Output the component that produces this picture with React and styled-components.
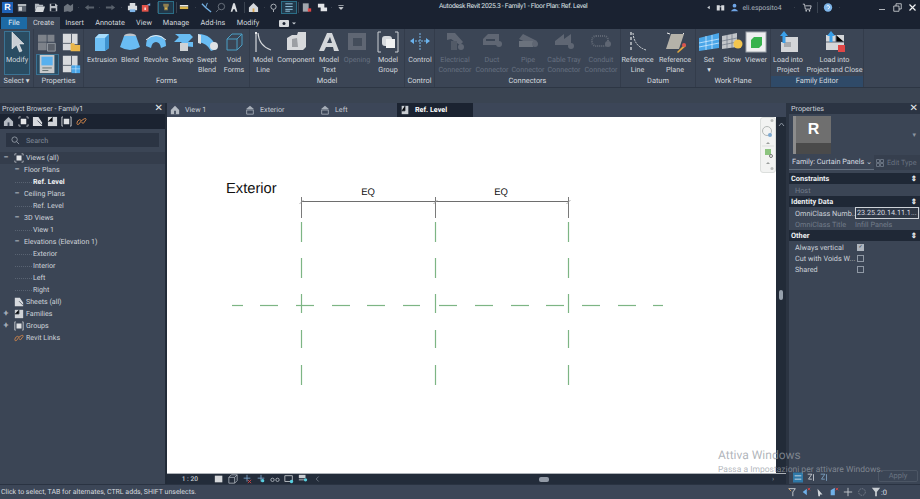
import React from "react";
import styled, { createGlobalStyle } from "styled-components";

const GlobalStyle = createGlobalStyle`
  html, body { margin: 0; padding: 0; background: #3a4452; }
  body {
    width: 920px;
    height: 499px;
    overflow: hidden;
    font-family: Roboto, "Liberation Sans", sans-serif;
    text-rendering: geometricPrecision;
  }
`;

const Shell = styled.div`
  position: relative;
  width: 920px;
  height: 499px;
  display: flex;
  flex-direction: column;
  background: #3a4452;
  color: #d8dde4;
  overflow: hidden;
`;

// title bar
const TitleBar = styled.div`
  height: 15px;
  flex: none;
  display: flex;
  align-items: center;
  background: #1a2231;
  position: relative;
`;
const Logo = styled.div`
  width: 11px;
  height: 11px;
  margin-left: 2px;
  background: #1f62b8;
  color: #fff;
  font: 700 9px/11px "Liberation Sans", sans-serif;
  text-align: center;
  flex: none;
`;
const Slot = styled.span`
  width: ${(p) => p.$w}px;
  height: 11px;
  flex: none;
  margin-left: ${(p) => p.$ml}px;
  display: flex;
  align-items: center;
  justify-content: center;
  white-space: nowrap;
  font-size: 6.9px;
  color: #aab2bd;
  ${(p) => p.$on && "outline: 1px solid #2b6d86; background: #21384a;"}
  ${(p) => p.$sep && "background: #3a4350;"}
  svg { width: ${(p) => p.$w}px; height: 11px; display: block; }
`;
const Title = styled.div`
  position: absolute;
  left: 439px;
  top: 0;
  font-size: 6.8px;
  letter-spacing: -0.3px;
  line-height: 12px;
  color: #dfe3e8;
  white-space: nowrap;
`;

// tabs
const TabRow = styled.div`
  height: 14px;
  flex: none;
  display: flex;
  background: #1a2231;
  padding-left: 1px;
  font-size: 7.3px;
`;
const RibbonTab = styled.div`
  width: ${(p) => p.$w}px;
  text-align: center;
  color: ${(p) => (p.$file ? "#e8f1f8" : "#d3d8de")};
  background: ${(p) => (p.$file ? "#1d6aa5" : p.$active ? "#3b4555" : "transparent")};
  margin-top: 2px;
  height: 12px;
  line-height: 12px;
`;
const TabExtra = styled.div`
  margin: 4px 0 0 14px;
  display: flex;
  gap: 3px;
  svg { width: 10px; height: 8px; display: block; }
`;

// ribbon
const Ribbon = styled.div`
  height: 58px;
  flex: none;
  display: flex;
  background: #3b4555;
  border-bottom: 1px solid #2d3644;
`;
const Panel = styled.div`
  width: ${(p) => p.$w}px;
  flex: none;
  display: flex;
  flex-direction: column;
  box-sizing: border-box;
  border-right: 1px solid #333c4b;
`;
const PanelBody = styled.div`
  height: 47px;
  display: flex;
  padding-top: 2px;
  padding-left: ${(p) => p.$pl || 0}px;
  box-sizing: border-box;
`;
const PanelLabel = styled.div`
  height: 11px;
  font-size: 7.4px;
  line-height: 10px;
  text-align: center;
  color: #d3d8de;
  background: ${(p) => (p.$accent ? "#2f4a68" : "transparent")};
`;
const Tool = styled.div`
  width: ${(p) => p.$w}px;
  flex: none;
  display: flex;
  flex-direction: column;
  align-items: center;
  font-size: 7.2px;
  line-height: 9.5px;
  text-align: center;
  white-space: nowrap;
  color: ${(p) => (p.$off ? "#667080" : "#d3d8de")};
  ${(p) =>
    p.$on &&
    "background: #2a4c62; outline: 1px solid #3a7394; outline-offset: -1px; height: 44px;"}
  svg { height: 22px; width: 24px; margin-bottom: 2px; flex: none; ${(p) => p.$off && "opacity: .45;"} }
`;
const PropGrid = styled.div`
  width: 50px;
  display: grid;
  grid-template-columns: 23px 23px;
  grid-auto-rows: 21px;
  gap: 1px;
  padding: 1px 2px;
  svg { width: 21px; height: 19px; }
`;
const PropCell = styled.div`
  display: flex;
  align-items: center;
  justify-content: center;
  ${(p) => p.$on && "background: #2a4c62; outline: 1px solid #3a7394; outline-offset: -1px;"}
`;
const Gap = styled.div`
  height: 15px;
  flex: none;
  background: #3a4452;
`;

// main area
const Main = styled.div`
  flex: 1;
  min-height: 0;
  display: flex;
`;
const Browser = styled.aside`
  width: 165px;
  flex: none;
  background: #3b4555;
  display: flex;
  flex-direction: column;
  border-right: 2px solid #222b38;
`;
const DockTitle = styled.div`
  height: 11px;
  flex: none;
  display: flex;
  justify-content: space-between;
  align-items: center;
  background: #2b3443;
  padding: 0 2px;
  font-size: 7.2px;
  color: #ccd2d9;
`;
const Close = styled.span`
  font-size: 10px;
  color: #e4e7ea;
  line-height: 10px;
`;
const BrowserTools = styled.div`
  height: 15px;
  flex: none;
  display: flex;
  align-items: center;
  gap: 3.5px;
  padding-left: 3px;
  background: #1b2331;
  svg { width: 11px; height: 11px; }
`;
const SearchBox = styled.div`
  height: 14px;
  margin: 4px 6px 5px 6px;
  display: flex;
  align-items: center;
  gap: 6px;
  padding-left: 5px;
  background: #2b3443;
  color: #737d8b;
  font-size: 7.2px;
  font-weight: 500;
`;
const Tree = styled.div`
  display: flex;
  flex-direction: column;
`;
const TreeRow = styled.div`
  height: 12px;
  display: flex;
  align-items: center;
  padding-left: ${(p) => p.$indent}px;
  font-size: 7.1px;
  line-height: 12px;
  white-space: nowrap;
  color: #cfd4db;
  font-weight: ${(p) => (p.$bold ? 700 : 400)};
  ${(p) => p.$bold && "color: #f1f3f5;"}
  ${(p) => p.$shade && "background: #343d4c;"}
  svg { width: 10px; height: 10px; margin-right: 2px; flex: none; }
`;
const Lead = styled.span`
  width: ${(p) => p.$w}px;
  flex: none;
  border-top: 1px dotted #596372;
  margin-right: 1px;
`;
const Toggle = styled.span`
  width: 6px;
  flex: none;
  margin-right: ${(p) => p.$gap}px;
  text-align: center;
  color: #aeb6c0;
  font-size: 9px;
  font-weight: 700;
`;

const Center = styled.section`
  width: 619px;
  flex: none;
  display: flex;
  flex-direction: column;
  min-width: 0;
`;
const ViewTabs = styled.div`
  height: 14px;
  flex: none;
  display: flex;
  background: #3c4658;
  font-size: 7.2px;
  line-height: 14px;
`;
const ViewTab = styled.div`
  width: ${(p) => p.$w}px;
  flex: none;
  display: flex;
  align-items: center;
  padding-left: ${(p) => p.$pad}px;
  gap: 5px;
  box-sizing: border-box;
  color: ${(p) => (p.$active ? "#fff" : "#c7ccd4")};
  font-weight: ${(p) => (p.$active ? 700 : 400)};
  background: ${(p) => (p.$active ? "#1b2331" : "transparent")};
  svg { width: 10px; height: 10px; flex: none; }
`;
const CanvasRow = styled.div`
  height: 356px;
  flex: none;
  display: flex;
`;
const CanvasWrap = styled.div`
  position: relative;
  width: 609px;
  flex: none;
  background: #fff;
`;
const Drawing = styled.svg`
  width: 609px;
  height: 356px;
  display: block;
`;
const NavBar = styled.div`
  position: absolute;
  right: 0;
  top: 0;
  width: 16px;
  height: 56px;
  background: #f2f3f2;
  border: 1px solid #dcdfdd;
  border-radius: 3px;
  box-sizing: border-box;
  svg { display: block; width: 14px; height: 54px; }
`;
const ViewBar = styled.div`
  height: 11px;
  flex: none;
  display: flex;
  align-items: center;
  background: #232c3a;
  border-top: 1px solid #aeb2b8;
  box-sizing: border-box;
  font-size: 6.6px;
  color: #c7ccd4;
`;
const Scale = styled.span`
  width: 34px;
  flex: none;
  text-align: right;
  padding-right: 3px;
  box-sizing: border-box;
  font-weight: 500;
`;
const BarIcons = styled.div`
  display: flex;
  align-items: center;
  gap: 4px;
  margin-left: 13px;
  svg { width: 10px; height: 10px; display: block; }
`;
const HThumb = styled.span`
  width: 10px;
  height: 5px;
  border-radius: 2px;
  background: #929aa6;
  margin-left: 217px;
`;
const BarEnd = styled.span`
  margin-left: auto;
  padding-right: 12px;
  color: #8b94a0;
  font-size: 7px;
`;
const VScroll = styled.div`
  width: 10px;
  flex: none;
  display: flex;
  flex-direction: column;
  align-items: center;
  background: #222b38;
`;
const VArrow = styled.span`
  height: 8px;
  margin-top: 4px;
  svg { width: 7px; height: 6px; display: block; }
`;
const VThumb = styled.span`
  width: 4px;
  height: 10px;
  margin-top: 161px;
  background: #96a0ac;
  border-radius: 2px;
`;
const Divider = styled.div`
  width: 3px;
  flex: none;
  background: #2b3442;
`;

const Props = styled.aside`
  flex: 1;
  min-width: 0;
  display: flex;
  flex-direction: column;
  background: #3b4555;
  font-size: 7.3px;
`;
const TypeBox = styled.div`
  height: 41px;
  flex: none;
  display: flex;
  justify-content: space-between;
  align-items: center;
  padding: 1px 4px 0 4px;
  box-sizing: border-box;
`;
const RTile = styled.div`
  width: 38px;
  height: 38px;
  background: linear-gradient(180deg, #6f6f6f 0 72%, #4a4a4a 72%);
  color: #fff;
  font: 700 16px/27px "Liberation Sans", sans-serif;
  text-align: center;
  border-left: 3px solid #8c8c8c;
  box-sizing: border-box;
`;
const FamilyRow = styled.div`
  height: 15px;
  flex: none;
  display: flex;
  align-items: center;
  justify-content: space-between;
  margin-bottom: 3px;
  color: #d7dbe1;
  white-space: nowrap;
`;
const FamilySelect = styled.span`
  width: 85px;
  height: 15px;
  flex: none;
  box-sizing: border-box;
  padding-left: 3px;
  line-height: 14px;
  border-bottom: 1px solid #65707f;
`;
const EditType = styled.span`
  flex: 1;
  height: 15px;
  display: flex;
  align-items: center;
  gap: 3px;
  padding-left: 2px;
  color: #687281;
  background: #363f4e;
  svg { width: 8px; height: 8px; }
`;
const GroupHead = styled.div`
  height: 11.4px;
  display: flex;
  justify-content: space-between;
  align-items: center;
  padding: 0 3px 0 2px;
  background: #1f2836;
  color: #eceef1;
  font-weight: 700;
  font-size: 7.4px;
  line-height: 11px;
`;
const PropRow = styled.div`
  height: 11.4px;
  display: grid;
  grid-template-columns: 60px 1fr;
  align-items: center;
  padding-left: 6px;
  color: ${(p) => (p.$off ? "#727c8a" : "#ccd2d9")};
  white-space: nowrap;
  line-height: 11px;
`;
const ValueBox = styled.span`
  border: 1px solid #cdd2d8;
  background: #2f3846;
  color: #d9dde2;
  height: 10px;
  line-height: 9px;
  margin-right: 1px;
  padding-left: 1px;
  overflow: hidden;
  font-size: 7.2px;
`;
const Check = styled.span`
  width: 5px;
  height: 5px;
  margin-left: 2px;
  border: 1px solid #8f98a4;
  display: block;
  ${(p) => p.$on && "background: #aeb5be; border-color: #aeb5be; color: #2c3543; font: 700 5px/5px 'DejaVu Sans', sans-serif; text-align: center;"}
`;
const Spacer = styled.div`
  flex: 1;
`;
const ApplyRow = styled.div`
  height: 13px;
  flex: none;
  display: flex;
  align-items: center;
  justify-content: flex-end;
  padding: 0 2px 2px 0;
`;
const SortIcons = styled.div`
  position: absolute;
  left: 793px;
  top: 472px;
  display: flex;
  gap: 3px;
  svg { width: 10px; height: 11px; display: block; }
`;
const ApplyBtn = styled.span`
  width: 38px;
  height: 10px;
  border: 1px solid #4c5665;
  border-radius: 2px;
  color: #697381;
  font-size: 7.5px;
  line-height: 10px;
  text-align: center;
`;

const StatusBar = styled.footer`
  height: 15px;
  flex: none;
  display: flex;
  align-items: center;
  justify-content: space-between;
  background: #3c4657;
  border-top: 1px solid #2a3342;
  box-sizing: border-box;
  padding: 0 33px 0 1px;
  font-size: 7px;
  color: #d4d9df;
`;
const StatusIcons = styled.div`
  display: flex;
  align-items: center;
  gap: 4px;
  color: #d8dce1;
  svg { width: 10px; height: 10px; display: block; }
`;
const FilterCount = styled.span`
  display: flex;
  align-items: center;
  font-size: 7.5px;
`;
const Watermark = styled.div`
  position: absolute;
  left: 718px;
  top: 447px;
  color: rgba(150, 156, 164, 0.75);
  white-space: nowrap;
  pointer-events: none;
`;
const WatermarkBig = styled.div`
  font-size: 12px;
  line-height: 16px;
`;
const WatermarkSmall = styled.div`
  font-size: 8.5px;
  line-height: 14px;
`;

/* ---- drawings ---- */
const V = ({ children }) => <svg viewBox="0 0 24 22">{children}</svg>;
const ICONS = {
  extrusion: <V><path d="M5 7l4-4h10v14l-4 3H5z" fill="#6fc0f5"/><path d="M5 7l4-4h10l-4 4z" fill="#a7dcfb"/><path d="M15 7l4-4v14l-4 3z" fill="#3f93d0"/></V>,
  blend: <V><ellipse cx="12" cy="5" rx="6" ry="2.5" fill="#bfc3c8"/><path d="M6 5h12l4 11q-10 6-20 0z" fill="#69bcf3"/></V>,
  revolve: <V><path d="M2 15q0-11 10-11t10 11l-5 2q-1-6-5-6t-5 6z" fill="#69bcf3"/><path d="M2 9q10-9 20 0" fill="none" stroke="#e4e6e8" strokeWidth="1"/></V>,
  sweep: <V><path d="M4 3h15l3 3-5 5h5v5l-9-1-3-4H3l5-5z" fill="#69bcf3"/><rect x="9" y="12" width="8" height="8" fill="#cfd2d5"/></V>,
  swept: <V><path d="M3 3q14 0 19 15l-6 2q-4-8-13-9z" fill="#69bcf3"/><path d="M3 3v9l3 1V4z" fill="#dde0e3"/><circle cx="19" cy="15" r="4" fill="#dfe2e5"/></V>,
  voidf: <V><path d="M5 8l5-5h10v11l-5 5H5zM5 8h10v11M15 8l5-5" fill="none" stroke="#4a9fc5" strokeWidth="1"/></V>,
  mline: <V><path d="M5 1v20" stroke="#c9cdd2" strokeWidth="1.3"/><path d="M7 2q1 13 13 17" fill="none" stroke="#d8dbde" strokeWidth="1.1"/><circle cx="5" cy="2" r="1" fill="#fff"/></V>,
  component: <V><path d="M3 7l5-3h5l1-3h8v15l-3 3H3z" fill="#d7d9dc"/><path d="M13 7l1 9h-1l-5 0V8z" fill="#9c9fa4"/></V>,
  mtext: <V><path d="M2 20L10 2h5l7 18h-5l-1-4H9l-2 4zM10 12h5l-2-6z" fill="#d4d7da"/></V>,
  opening: <V><rect x="3" y="2" width="18" height="17" fill="#8b9098"/><rect x="8" y="7" width="9" height="8" fill="#4f5864"/></V>,
  group: <V><path d="M5 1H2v20h3M19 1h3v20h-3" fill="none" stroke="#cdd1d6"/><rect x="6" y="5" width="10" height="10" rx="3" fill="#d7dade"/><rect x="10" y="8" width="9" height="9" fill="#f0f1f2"/></V>,
  control: <V><path d="M4 10h16M12 2v17" stroke="#78b6e8" strokeWidth="1" strokeDasharray="2 1"/><path d="M2 10l4-3v6zM22 10l-4-3v6z" fill="#6ab3ee"/></V>,
  electric: <V><path d="M4 2h8l8 9-3 3-9-6-4 1z" fill="#8b9098"/><path d="M8 10h6v9H8z" fill="#6f757e"/><circle cx="18" cy="16" r="3" fill="#8b9098"/></V>,
  duct: <V><path d="M3 8l5-5h11v11H3z" fill="#8b9098"/><path d="M6 8h9v2H6z" fill="#3f4856"/><circle cx="19" cy="13" r="3" fill="#8b9098"/></V>,
  pipe: <V><path d="M3 8l4-5 14 7-3 5z" fill="#8b9098"/><path d="M3 10h14v6H3z" fill="#a5a9af"/><circle cx="19" cy="13" r="3" fill="#8b9098"/></V>,
  tray: <V><path d="M3 10l9-7v5l7-5v11H3z" fill="#8b9098"/><circle cx="19" cy="15" r="3" fill="#8b9098"/></V>,
  conduit: <V><rect x="3" y="5" width="16" height="10" rx="4" fill="none" stroke="#8b9098" strokeWidth="2" strokeDasharray="1 1"/><circle cx="19" cy="13" r="3" fill="#8b9098"/></V>,
  rline: <V><path d="M5 1v20" stroke="#d7dadd" strokeWidth="1.3" strokeDasharray="3 2"/><path d="M7 2q1 13 13 17" fill="none" stroke="#d8dbde" strokeDasharray="2 1"/></V>,
  rplane: <V><path d="M8 3h13l-5 15H3z" fill="#b5b2a9"/><path d="M4 2l3 1M20 2l1 1" stroke="#eee"/><path d="M14 21l8-8 1 2-8 7z" fill="#e0a63f"/><circle cx="21" cy="14" r="2" fill="#d9534f"/></V>,
  set: <V><path d="M2 7l20-5v15L2 20z" fill="#4aa6e8"/><path d="M2 12l20-4M2 16l20-4M9 5v14M15 4v14" stroke="#cfeaff" strokeWidth=".8"/></V>,
  show: <V><path d="M2 5l15-3v14L2 18z" fill="#c2c5c9"/><path d="M2 10l15-3M2 14l15-3M7 4v14M12 3v14" stroke="#60697a" strokeWidth=".6"/><circle cx="18" cy="13" r="4.5" fill="#f3c54e"/></V>,
  viewer: <V><rect x="2" y="1" width="20" height="20" fill="#eeeff0" stroke="#9ea4ab"/><path d="M7 9l3-3h8v8l-3 3H7z" fill="#37b24d"/></V>,
  load: <V><path d="M8 6h14v15H5V11h3z" fill="#d4d6d9"/><path d="M8 11h7v5H8z" fill="#a7aaae"/><path d="M8 0l4 5h-2.500v7h-3V5H4z" fill="#3aa0ea"/></V>,
  loadx: <V><path d="M3 4h18v15H3z" fill="#d4d6d9"/><path d="M13 4v7h8M3 11h10" stroke="#5b6472" strokeWidth="1"/><path d="M8 0l4 5H9.500v6h-3V5H4z" fill="#3aa0ea"/><rect x="15" y="14" width="7" height="7" fill="#e04646"/></V>,
  modify: <V><path d="M7 1l12 12h-5l3 7-2.500 1-3-7L7 18z" fill="#c9ced4" stroke="#fff" strokeWidth=".5"/></V>,
  p1: <V><path d="M1 2h10v8H1zM12 2h8v8h-8zM1 11h10v9H1z" fill="#7d828a"/><path d="M12 12h9v9h-9z" fill="#5b616b" stroke="#9aa0a7"/></V>,
  p2: <V><path d="M2 1h17v12h-7v7H2z" fill="#d8dadd"/><path d="M2 12h10M12 1v11" stroke="#4a5361"/><path d="M11 12h4l1 2h6v7H11z" fill="#eab64a"/></V>,
  p3: <V><rect x="3" y="0" width="17" height="21" fill="#c8cacc"/><rect x="5" y="2" width="13" height="10" fill="#58b0ee"/><path d="M6 15h11M6 18h7" stroke="#566"/></V>,
  p4: <V><path d="M2 1h17v12h-7v7H2z" fill="#d8dadd"/><path d="M2 12h10M12 1v11" stroke="#4a5361"/><path d="M12 12h10v9H12z" fill="#4aa6e8"/><path d="M17 12v9M12 16h10" stroke="#cfeaff" strokeWidth=".7"/></V>,
};
const S = ({ children }) => <svg viewBox="0 0 12 12">{children}</svg>;
const Views = <S><path d="M3 3h6v6H3z" fill="#e4e6e8"/><path d="M1 3V1h2M9 1h2v2M1 9v2h2M9 11h2V9" fill="none" stroke="#d5d8dc" strokeWidth=".8"/></S>;
const Sheets = <S><path d="M1 1h6l4 6v4H1z" fill="#d7dade"/><path d="M6 5l5 5" stroke="#49525f"/></S>;
const Families = <S><path d="M1 1h10v10H1z" fill="#cfd2d6"/><path d="M6 1v5H1" stroke="#46505d"/></S>;
const Groups = <S><path d="M2 1H1v10h1M10 1h1v10h-1" fill="none" stroke="#d5d8dc"/><rect x="3" y="3" width="6" height="6" fill="#dfe1e4"/></S>;
const Links = <S><path d="M1 8q0-3 3-4l2 1-3 4q-2 1-2-1zM6 7l2 1 3-4q0-2-2-1L6 5" fill="none" stroke="#d8894a" strokeWidth="1"/></S>;
const Home = <S><path d="M1 6l5-5 5 5v5H1z" fill="#b4bac2"/><path d="M5 7h2v4H5z" fill="#3c4658"/></S>;
const Elev = <S><path d="M6 1l5 4H1z" fill="#a7aeb8"/><path d="M2 6h8v5H2z" fill="none" stroke="#a7aeb8"/></S>;
const Plan = <S><path d="M2 1h8v10H2z" fill="#c9cdd2"/><path d="M6 1v6H2" stroke="#1b2331"/></S>;
const Caret = <S><circle cx="6" cy="6" r="1" fill="#c4c9cf" /></S>;

const TOOLS = {
  forms: [["Extrusion", "extrusion", 36], ["Blend", "blend", 20], ["Revolve", "revolve", 32], ["Sweep", "sweep", 22], ["Swept\nBlend", "swept", 26], ["Void\nForms", "voidf", 28]],
  model: [["Model\nLine", "mline", 26], ["Component", "component", 40], ["Model\nText", "mtext", 26], ["Opening", "opening", 30, true], ["Model\nGroup", "group", 32]],
  connectors: [["Electrical\nConnector", "electric", 40, true], ["Duct\nConnector", "duct", 34, true], ["Pipe\nConnector", "pipe", 38, true], ["Cable Tray\nConnector", "tray", 34, true], ["Conduit\nConnector", "conduit", 40, true]],
};

const Lines = ({ text }) => text.split("\n").map((l) => <div key={l}>{l}</div>);
const RTool = ({ label, icon, w, off, on }) => (
  <Tool $w={w} $off={off} $on={on}>
    {ICONS[icon]}
    <Lines text={label} />
  </Tool>
);

// [centre x, width, drawing, options] for the two title bar icon strips
const QAT_ITEMS = [
  [22, 10, <S><path d="M1 2h10v9H1z" fill="#5c6470" /><path d="M1 2h10v2H1zM2 5h4v5H2z" fill="#cfd3d8" /></S>],
  [39, 11, <S><path d="M1 2h4l1 1h4v2H3L1 10z" fill="#b4b9c0" /><path d="M3 5h9l-2 6H1z" fill="#d6d9dd" /></S>],
  [53, 9, <S><path d="M1 1h8l2 2v8H1z" fill="#b9bdc3" /><path d="M3 1h5v3H3zM3 7h6v4H3z" fill="#1a2231" /></S>],
  [68, 11, <S><path d="M1 5l4-3 3 2 3-2v7l-3 2-3-1-4 1z" fill="#6d747e" /></S>],
  [78, 3, Caret],
  [89, 11, <S><path d="M1 6l4-3v2h6v2H5v2z" fill="#59616c" /></S>],
  [99, 3, Caret],
  [110, 11, <S><path d="M11 6L7 3v2H1v2h6v2z" fill="#59616c" /></S>],
  [121, 3, Caret],
  [132, 11, <S><path d="M3 1h6v3H3zM1 4h10v5H1z" fill="#d9dcdf" /><path d="M3 8h6v3H3z" fill="#7fb6ea" /></S>],
  [146, 10, <S><path d="M1 3h8v8H1z" fill="#e2554b" /><path d="M4 6h2v3H4z" fill="#f5d6d3" /><path d="M7 3l4-2v3z" fill="#7fb6ea" /></S>],
  [157, 1, null, { sep: true }],
  [166, 14, <S><path d="M3 2h6v3H8v4H4V5H3z" fill="#8f7f50" /><circle cx="6" cy="7" r="1" fill="#e6c14f" /></S>, { on: true }],
  [176, 1, null, { sep: true }],
  [184, 10, <S><path d="M1 3h10v2H1z" fill="#e8e8e8" /><path d="M1 5h10v3H1z" fill="#d8b44a" /><path d="M1 8h10v1H1z" fill="#222" /></S>],
  [195, 3, Caret],
  [206, 11, <S><path d="M1 2l4 4 6 5" fill="none" stroke="#74b1e4" strokeWidth="1.500" /><path d="M7 1l-2 5" stroke="#74b1e4" /></S>],
  [220, 11, <S><circle cx="7" cy="5" r="3.500" fill="none" stroke="#6f7681" /><path d="M4 8l-3 3" stroke="#6f7681" /></S>],
  [234, 10, <S><path d="M2 11L5 1h2l3 10H8L7 8H5l-1 3z" fill="#dcdfe2" /></S>],
  [244, 1, null, { sep: true }],
  [253, 11, <S><path d="M1 6l5-5 5 5v5H1z" fill="#d6d9dd" /><path d="M5 7h2v4H5z" fill="#d9a653" /></S>],
  [264, 3, Caret],
  [273, 9, <S><circle cx="6" cy="5" r="3.500" fill="none" stroke="#d6d9dd" /><path d="M6 9v3" stroke="#d6d9dd" /></S>],
  [289, 14, <S><path d="M2 2h8M2 5h8M2 8h8M2 10h5" stroke="#9fd0ec" /></S>, { on: true }],
  [298, 1, null, { sep: true }],
  [307, 10, <S><path d="M1 1h7v10H1z" fill="#a0a5ac" /><path d="M7 7h4v4H7z" fill="#e04646" /></S>],
  [322, 11, <S><path d="M1 2h7v4H1zM4 6h7v4H4z" fill="#e2e4e7" /></S>],
  [331, 3, Caret],
  [341, 8, <S><path d="M2 3h8M3 6h6l-3 3z" fill="#d6d9dd" stroke="#d6d9dd" /></S>],
];
const USER_ITEMS = [
  [708, 5, <S><path d="M9 2L3 6l6 4z" fill="#c9ced4" /></S>],
  [720, 9, <S><path d="M1 3h4v7H1zM7 3h4v7H7z" fill="#d6d9dd" /><path d="M4 5h4" stroke="#d6d9dd" /></S>],
  [734, 9, <S><circle cx="6" cy="3.500" r="2.500" fill="#6fa5e6" /><path d="M1 11q5-7 10 0z" fill="#6fa5e6" /></S>],
  [762, 42, "eli.esposito4"],
  [794, 3, Caret],
  [807, 10, <S><path d="M1 2h2l1 6h6l1-4H4" fill="none" stroke="#d6d9dd" /><circle cx="5" cy="10" r="1" fill="#d6d9dd" /><circle cx="9" cy="10" r="1" fill="#d6d9dd" /></S>],
  [817, 1, null, { sep: true }],
  [828, 10, <S><circle cx="6" cy="6" r="5" fill="#7fb6ea" /><path d="M4.500 4.500q1.500-2 3 0T6 7.500V8" fill="none" stroke="#fff" /></S>],
  [839, 3, Caret],
  [882, 6, <S><path d="M0 10h12" stroke="#e4e7ea" strokeWidth="1.500" /></S>],
  [897, 9, <S><path d="M1 4h7v7H1zM4 4V1h7v7H8" fill="none" stroke="#e4e7ea" /></S>],
  [912, 9, <S><path d="M2 2l8 8M10 2l-8 8" stroke="#f0f2f4" strokeWidth="1.600" /></S>],
];

const IconStrip = ({ items, start }) => {
  let right = start;
  return items.map(([c, w, draw, opt], i) => {
    const left = c - w / 2;
    const ml = left - right;
    right = left + w;
    return (
      <Slot key={i} $w={w} $ml={ml} $on={opt && opt.on} $sep={opt && opt.sep}>{draw}</Slot>
    );
  });
};

const HDASH = [[65, 76], [93, 111], [129, 147], [165, 183], [200, 218], [236, 253], [272, 290], [308, 326], [344, 362], [379, 397], [415, 433], [451, 469], [486, 496]];
const VDASH = [[105, 125], [141, 161], [177, 196], [213, 231], [248, 268]];
const AXES = [134, 268, 401];

const BROWSER = [
  { indent: 3, t: "−", tg: 5, icon: Views, text: "Views (all)", shade: true },
  { indent: 14, t: "−", tg: 4, text: "Floor Plans" },
  { indent: 15, lead: 17, text: "Ref. Level", bold: true },
  { indent: 14, t: "−", tg: 4, text: "Ceiling Plans" },
  { indent: 15, lead: 17, text: "Ref. Level" },
  { indent: 14, t: "−", tg: 4, text: "3D Views" },
  { indent: 15, lead: 17, text: "View 1" },
  { indent: 14, t: "−", tg: 4, text: "Elevations (Elevation 1)" },
  { indent: 15, lead: 17, text: "Exterior" },
  { indent: 15, lead: 17, text: "Interior" },
  { indent: 15, lead: 17, text: "Left" },
  { indent: 15, lead: 17, text: "Right" },
  { indent: 14, icon: Sheets, text: "Sheets (all)" },
  { indent: 3, t: "+", tg: 5, icon: Families, text: "Families" },
  { indent: 3, t: "+", tg: 5, icon: Groups, text: "Groups" },
  { indent: 14, icon: Links, text: "Revit Links" },
];

export default function App() {
  return (
    <Shell>
      <GlobalStyle />
      <TitleBar>
        <Logo>R</Logo>
        <IconStrip items={QAT_ITEMS} start={13} />
        <IconStrip items={USER_ITEMS} start={345} />
        <Title>Autodesk Revit 2025.3 - Family1 - Floor Plan: Ref. Level</Title>
      </TitleBar>

      <TabRow>
        <RibbonTab $file $w={26}>File</RibbonTab>
        <RibbonTab $active $w={33}>Create</RibbonTab>
        <RibbonTab $w={29}>Insert</RibbonTab>
        <RibbonTab $w={42}>Annotate</RibbonTab>
        <RibbonTab $w={26}>View</RibbonTab>
        <RibbonTab $w={38}>Manage</RibbonTab>
        <RibbonTab $w={36}>Add-Ins</RibbonTab>
        <RibbonTab $w={34}>Modify</RibbonTab>
        <TabExtra>
          <svg viewBox="0 0 10 8"><rect y="1" width="10" height="7" rx="1" fill="#d6d9dd" /><circle cx="5" cy="4.500" r="1.500" fill="#1a2231" /></svg>
          <svg viewBox="0 0 10 8" style={{ width: 4 }}><path d="M0 3h10L5 8z" fill="#c9ced4" /></svg>
        </TabExtra>
      </TabRow>

      <Ribbon>
        <Panel $w={34}>
          <PanelBody $pl={4}><RTool label="Modify" icon="modify" w={26} on /></PanelBody>
          <PanelLabel>Select ▾</PanelLabel>
        </Panel>
        <Panel $w={50}>
          <PanelBody>
            <PropGrid>
              <PropCell>{ICONS.p1}</PropCell>
              <PropCell>{ICONS.p2}</PropCell>
              <PropCell $on>{ICONS.p3}</PropCell>
              <PropCell>{ICONS.p4}</PropCell>
            </PropGrid>
          </PanelBody>
          <PanelLabel>Properties</PanelLabel>
        </Panel>
        <Panel $w={166}>
          <PanelBody>
            {TOOLS.forms.map(([l, i, w]) => <RTool key={l} label={l} icon={i} w={w} />)}
          </PanelBody>
          <PanelLabel>Forms</PanelLabel>
        </Panel>
        <Panel $w={155}>
          <PanelBody>
            {TOOLS.model.map(([l, i, w, off]) => <RTool key={l} label={l} icon={i} w={w} off={off} />)}
          </PanelBody>
          <PanelLabel>Model</PanelLabel>
        </Panel>
        <Panel $w={30}>
          <PanelBody><RTool label="Control" icon="control" w={30} /></PanelBody>
          <PanelLabel>Control</PanelLabel>
        </Panel>
        <Panel $w={186}>
          <PanelBody>
            {TOOLS.connectors.map(([l, i, w, off]) => <RTool key={l} label={l} icon={i} w={w} off={off} />)}
          </PanelBody>
          <PanelLabel>Connectors</PanelLabel>
        </Panel>
        <Panel $w={75}>
          <PanelBody>
            <RTool label={"Reference\nLine"} icon="rline" w={33} />
            <RTool label={"Reference\nPlane"} icon="rplane" w={42} />
          </PanelBody>
          <PanelLabel>Datum</PanelLabel>
        </Panel>
        <Panel $w={75}>
          <PanelBody>
            <RTool label={"Set\n▾"} icon="set" w={26} />
            <RTool label="Show" icon="show" w={20} />
            <RTool label="Viewer" icon="viewer" w={28} />
          </PanelBody>
          <PanelLabel>Work Plane</PanelLabel>
        </Panel>
        <Panel $w={93}>
          <PanelBody>
            <RTool label={"Load into\nProject"} icon="load" w={34} />
            <RTool label={"Load into\nProject and Close"} icon="loadx" w={59} />
          </PanelBody>
          <PanelLabel $accent>Family Editor</PanelLabel>
        </Panel>
      </Ribbon>
      <Gap />

      <Main>
        <Browser>
          <DockTitle>Project Browser - Family1<Close>✕</Close></DockTitle>
          <BrowserTools>
            {Home}{Views}{Sheets}{Families}{Groups}{Links}
          </BrowserTools>
          <SearchBox>
            <svg width="9" height="9" viewBox="0 0 10 10"><circle cx="4" cy="4" r="3" fill="none" stroke="#929aa5" /><path d="M6 6l3 3" stroke="#929aa5" /></svg>
            Search
          </SearchBox>
          <Tree>
            {BROWSER.map((r, i) => (
              <TreeRow key={i} $indent={r.indent} $bold={r.bold} $shade={r.shade}>
                {r.lead && <Lead $w={r.lead} />}
                {r.t && <Toggle $gap={r.tg}>{r.t}</Toggle>}
                {r.icon}
                {r.text}
              </TreeRow>
            ))}
          </Tree>
        </Browser>

        <Center>
          <ViewTabs>
            <ViewTab $w={78} $pad={3}>{Home}View 1</ViewTab>
            <ViewTab $w={75} $pad={0}>{Elev}Exterior</ViewTab>
            <ViewTab $w={77} $pad={0}>{Elev}Left</ViewTab>
            <ViewTab $active $w={76} $pad={3}>{Plan}Ref. Level</ViewTab>
          </ViewTabs>
          <CanvasRow>
            <CanvasWrap>
              <Drawing viewBox="0 0 609 356">
                <text x="59" y="76" fontFamily="Liberation Sans, sans-serif" fontSize="14.700" fill="#111">Exterior</text>
                <text x="201" y="78" fontFamily="Liberation Sans, sans-serif" fontSize="9.500" textAnchor="middle" fill="#111">EQ</text>
                <text x="334" y="78" fontFamily="Liberation Sans, sans-serif" fontSize="9.500" textAnchor="middle" fill="#111">EQ</text>
                <path d="M134 84.500H401" stroke="#6e6e6e" />
                {AXES.map((x) => (
                  <g key={x}>
                    <path d={`M${x + 0.5} 80V101`} stroke="#7a7a7a" />
                    <path d={`M${x - 1.5} 87l4-4`} stroke="#9a9a9a" strokeWidth=".8" />
                    {VDASH.map(([a, b]) => <path key={a} d={`M${x + 0.5} ${a}V${b}`} stroke="#7db584" strokeWidth="1.200" />)}
                  </g>
                ))}
                {HDASH.map(([a, b]) => <path key={a} d={`M${a} 188.500H${b}`} stroke="#7db584" strokeWidth="1.200" />)}
              </Drawing>
              <NavBar>
                <svg viewBox="0 0 14 54">
                  <circle cx="11" cy="2.500" r="1.500" fill="#b9bcba" />
                  <circle cx="6" cy="13" r="4.500" fill="none" stroke="#b3b8b6" />
                  <circle cx="9" cy="17" r="2" fill="#7da9d1" />
                  <path d="M7 24l2 2H5z" fill="#9a9e9c" />
                  <path d="M1 28h12" stroke="#dcdfdd" />
                  <rect x="4" y="31" width="6" height="6" fill="#8cc47f" />
                  <circle cx="10" cy="38" r="1.500" fill="none" stroke="#777" />
                  <path d="M7 44l2 2H5z" fill="#9a9e9c" />
                  <circle cx="11" cy="50.500" r="1.500" fill="#b9bcba" />
                </svg>
              </NavBar>
            </CanvasWrap>
            <VScroll>
              <VArrow><svg viewBox="0 0 7 6"><path d="M1 5l2.500-3L6 5" fill="none" stroke="#8b94a0" /></svg></VArrow>
              <VThumb />
            </VScroll>
          </CanvasRow>
          <ViewBar>
            <Scale>1 : 20</Scale>
            <BarIcons>
              <S><rect x="1" y="2" width="9" height="8" fill="#d6d8db" /></S>
              <S><path d="M1 4l3-3h7v7l-3 3H1zM1 4h7v7M8 4l3-3" fill="none" stroke="#a9b0b9" /></S>
              <S><path d="M6 1v8M2 5h8" stroke="#7fa8cf" /><path d="M7 7l4 4M11 7l-4 4" stroke="#e04646" /></S>
              <S><path d="M6 1v8M2 5h8" stroke="#7fa8cf" /><circle cx="8" cy="8" r="2" fill="#58d0e0" /></S>
              <S><circle cx="3" cy="7" r="2" fill="none" stroke="#b5bbc3" /><circle cx="9" cy="7" r="2" fill="none" stroke="#b5bbc3" /></S>
              <S><path d="M1 2h9v7H1z" fill="none" stroke="#c8ccd1" /><circle cx="9" cy="9" r="2" fill="#58d0e0" /></S>
              <S><path d="M1 1h8v4H1z" fill="#c8ccd1" /><path d="M1 7h6" stroke="#c8ccd1" /><circle cx="9" cy="7" r="2" fill="#58d0e0" /></S>
              <S><path d="M8 3L5 6l3 3" fill="none" stroke="#737c89" /></S>
            </BarIcons>
            <HThumb />
            <BarEnd>›</BarEnd>
          </ViewBar>
        </Center>
        <Divider />

        <Props>
          <DockTitle>Properties<Close>✕</Close></DockTitle>
          <TypeBox>
            <RTile>R</RTile>
            <span style={{ fontSize: 7, color: "#8b94a0" }}>▾</span>
          </TypeBox>
          <FamilyRow>
            <FamilySelect>Family: Curtain Panels ⌄</FamilySelect>
            <EditType>
              <svg viewBox="0 0 8 8"><path d="M.5.500h3v3h-3zM4.500.500h3v3h-3zM.5 4.500h3v3h-3zM4.500 4.500h3v3h-3z" fill="none" stroke="#687281" /></svg>
              Edit Type
            </EditType>
          </FamilyRow>
          <GroupHead>Constraints<span>⇕</span></GroupHead>
          <PropRow $off><span>Host</span></PropRow>
          <GroupHead>Identity Data<span>⇕</span></GroupHead>
          <PropRow><span>OmniClass Numb...</span><ValueBox>23.25.20.14.11.1...</ValueBox></PropRow>
          <PropRow $off><span>OmniClass Title</span><span>Infill Panels</span></PropRow>
          <GroupHead>Other<span>⇕</span></GroupHead>
          <PropRow><span>Always vertical</span><Check $on>✓</Check></PropRow>
          <PropRow><span>Cut with Voids W...</span><Check /></PropRow>
          <PropRow><span>Shared</span><Check /></PropRow>
          <Spacer />
          <ApplyRow><ApplyBtn>Apply</ApplyBtn></ApplyRow>
        </Props>
      </Main>

      <StatusBar>
        <span>Click to select, TAB for alternates, CTRL adds, SHIFT unselects.</span>
        <StatusIcons>
          <S><path d="M2 2h8L7 6v5" fill="none" stroke="#d9dde1" /><path d="M2 2l3 3" stroke="#e2a35a" /></S>
          <S><path d="M2 6l5-4v8z" fill="#6fb0e8" /><path d="M8 1l3 3M11 1L8 4" stroke="#e04646" /></S>
          <S><path d="M3 2l6 7H6v2H4z" fill="#cfd3d8" /></S>
          <S><path d="M2 10V4l5-3v9z" fill="#6fb0e8" /><path d="M8 1l3 3M11 1L8 4" stroke="#e04646" /></S>
          <S><path d="M6 1v10M1 6h10" stroke="#cfd3d8" /></S>
          <S><circle cx="6" cy="6" r="4" fill="none" stroke="#7d8591" strokeDasharray="2 1" /></S>
          <FilterCount>
            <S><path d="M1 1h10L7 6v5H5V6z" fill="#c9ced3" /></S>:0
          </FilterCount>
        </StatusIcons>
      </StatusBar>

      <SortIcons>
        <S><rect width="12" height="12" fill="#2f79a8" /><path d="M2 4h8M2 8h8" stroke="#dfe8ef" /></S>
        <S><path d="M2 2h5L3 8h4M9 2v8" fill="none" stroke="#cfd3d8" /></S>
        <S><path d="M2 2h5L3 8h4M9 2v8" fill="none" stroke="#7fa6c9" /></S>
      </SortIcons>
      <Watermark>
        <WatermarkBig>Attiva Windows</WatermarkBig>
        <WatermarkSmall>Passa a Impostazioni per attivare Windows.</WatermarkSmall>
      </Watermark>
    </Shell>
  );
}
